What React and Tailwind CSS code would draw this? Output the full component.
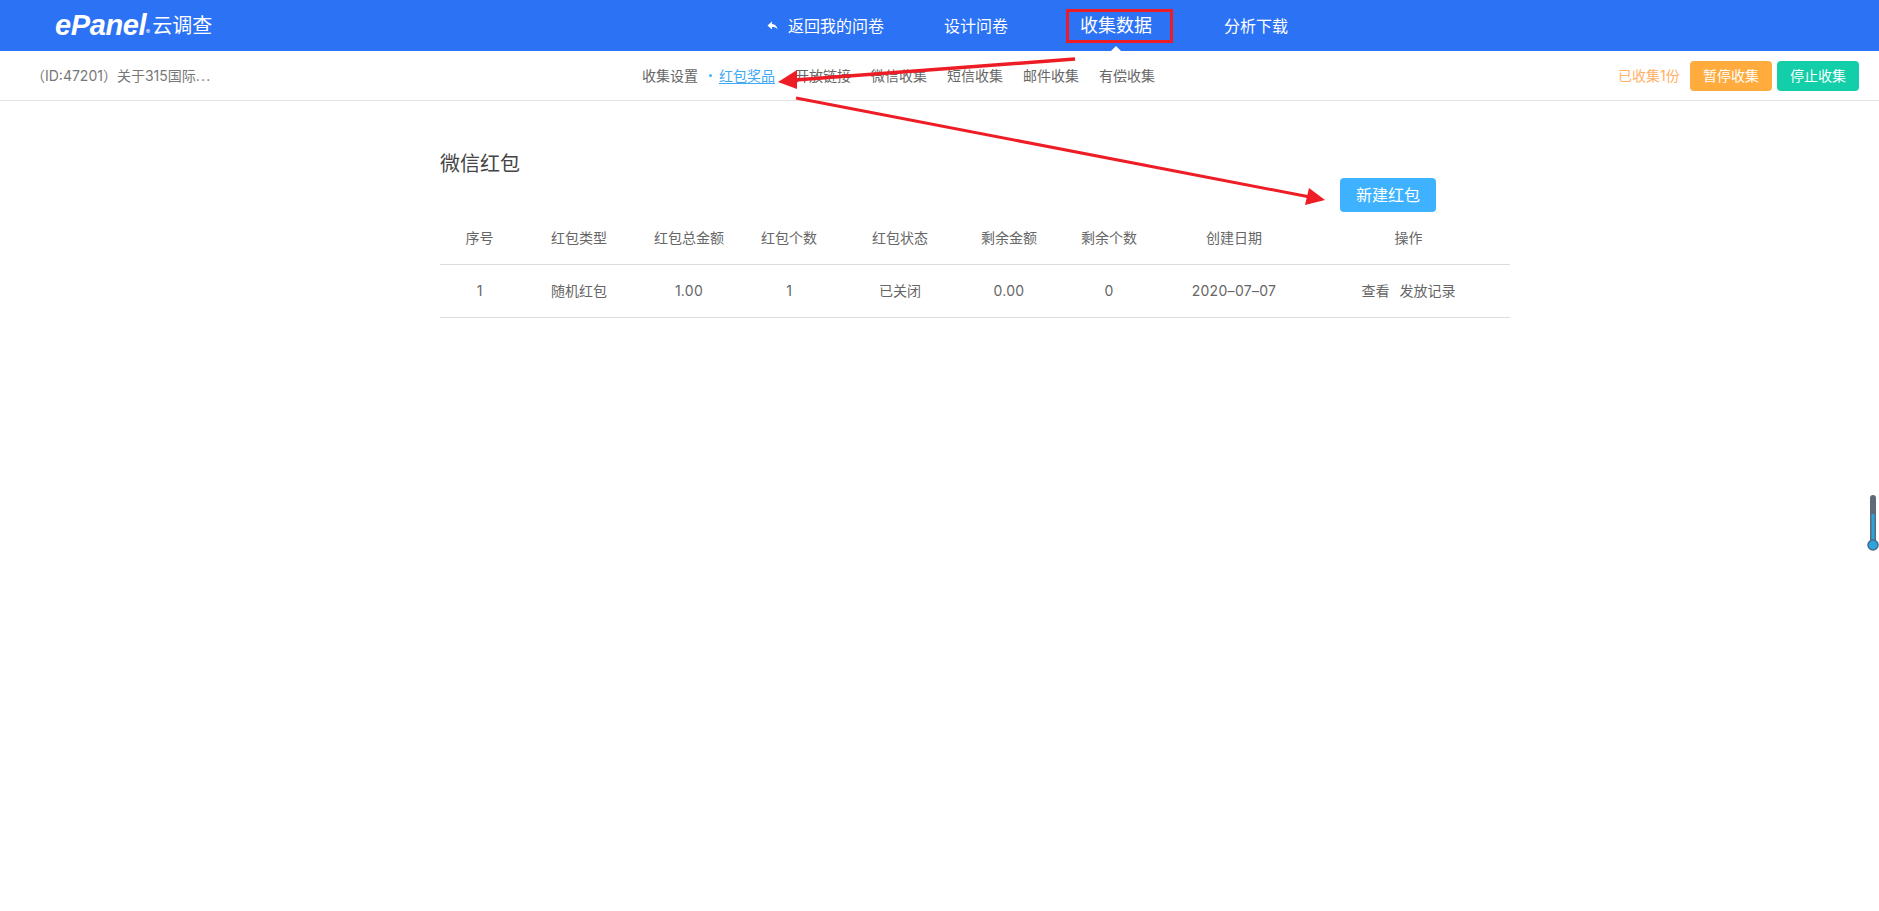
const fontStack = 'font-["Inter","Noto_Sans_CJK_SC",sans-serif]'

const subLinks = ['开放链接', '微信收集', '短信收集', '邮件收集', '有偿收集']

const columns = [
  { title: '序号', value: '1' },
  { title: '红包类型', value: '随机红包' },
  { title: '红包总金额', value: '1.00', numeric: true },
  { title: '红包个数', value: '1' },
  { title: '红包状态', value: '已关闭' },
  { title: '剩余金额', value: '0.00', numeric: true },
  { title: '剩余个数', value: '0' },
  { title: '创建日期', value: '2020–07–07', numeric: true },
]

const gridCols = 'grid grid-cols-[79px_120px_100px_100px_122px_96px_104px_146px_203px]'

const Header = () => (
  <div className="flex h-[51px] items-center bg-[#2c72f5] text-white">
    {/* Logo */}
    <div className="ml-[55px] flex w-[158px] items-center">
      <span className='font-["Liberation_Sans",sans-serif] text-[29px] leading-none font-bold tracking-[-0.4px] italic'>ePanel</span>
      <span className="mt-3 text-[6px] leading-none">®</span>
      <span className="ml-[2px] text-xl leading-none">云调查</span>
    </div>

    {/* Nav */}
    <div className="ml-[554px] flex items-center text-base">
      <svg className="mr-[9px] h-[12px] w-[12px]" viewBox="0 0 12 12" fill="currentColor">
        <path d="M5 1.5 0.5 5.5 5 9.5V7c2.6 0 4.300.6 5.600 2.600C10.200 6.400 8.300 4.300 5 4z" />
      </svg>
      <span>返回我的问卷</span>
      <span className="ml-[60px]">设计问卷</span>
      <span className="relative ml-[72px] text-lg">
        收集数据
        <span className="absolute bottom-[-12px] left-[30px] h-0 w-0 border-x-[6px] border-b-[6px] border-x-transparent border-b-white" />
      </span>
      <span className="ml-[72px]">分析下载</span>
    </div>
  </div>
)

const SubBar = () => (
  <div className="flex h-[50px] items-center border-b border-[#e2e2e2] bg-white text-sm text-[#666]">
    <span className="ml-[31px] w-[611px] text-[#777]">
      （ID:47201）关于315国际<span className="tracking-[1.2px]">...</span>
    </span>
    <span>收集设置</span>
    <span className="mr-[7px] ml-[11px] h-[3px] w-[3px] rounded-full bg-[#3fb2ff]" />
    <span className="text-[#3fa9f5] underline underline-offset-2">红包奖品</span>
    <div className="ml-5 flex gap-5">
      {subLinks.map((link) => (
        <span key={link}>{link}</span>
      ))}
    </div>
    <span className="ml-[463px] w-[72px] text-[#ffb066]">已收集1份</span>
    <button className="h-[30px] w-[82px] rounded bg-[#ffab3d] text-white">暂停收集</button>
    <button className="ml-[5px] h-[30px] w-[82px] rounded bg-[#12cfa9] text-white">停止收集</button>
  </div>
)

const RedPacketTable = () => (
  <div className="ml-[440px] w-[1070px] pt-[50px]">
    <h2 className="text-xl leading-[26px] text-[#444]">微信红包</h2>
    <div className="mt-[1px] flex justify-end pr-[74px]">
      <button className="h-[34px] w-[96px] rounded bg-[#3fb2ff] text-base text-white">新建红包</button>
    </div>

    {/* Table */}
    <div className={`${gridCols} h-[53px] items-center border-b border-[#dcdce0] text-center text-sm text-[#666]`}>
      {columns.map((col) => (
        <span key={col.title}>{col.title}</span>
      ))}
      <span>操作</span>
    </div>
    <div className={`${gridCols} h-[53px] items-center border-b border-[#dedede] text-center text-sm text-[#666]`}>
      {columns.map((col) => (
        <span key={col.title} className={col.numeric ? 'tracking-[0.3px]' : ''}>{col.value}</span>
      ))}
      <span className="flex justify-center gap-[10px]">
        <span>查看</span>
        <span>发放记录</span>
      </span>
    </div>
  </div>
)

// red marks drawn over the screenshot
const Annotations = () => (
  <>
    <div className="absolute top-[9px] left-[1066px] h-[34px] w-[107px] border-[3px] border-[#ee1c25]" />
    <svg className="pointer-events-none absolute top-0 left-0 h-[260px] w-[1400px]" viewBox="0 0 1400 260">
      <path d="M1075 59 795 80" stroke="#ee1c25" strokeWidth="3.500" fill="none" />
      <path d="M778 82 797 70 797 89z" fill="#ee1c25" />
      <path d="M796 98 1310 197" stroke="#ee1c25" strokeWidth="3" fill="none" />
      <path d="M1325 200 1309 188 1305 205z" fill="#ee1c25" />
    </svg>
  </>
)

const Thermometer = () => (
  <svg className="absolute top-[494px] right-[-2px] h-[58px] w-[16px]" viewBox="0 0 16 58">
    <rect x="5" y="1" width="6" height="50" rx="3" fill="#5c6b77" />
    <rect x="6.500" y="20" width="3" height="30" fill="#2aa5e0" />
    <circle cx="8" cy="51" r="5" fill="#2aa5e0" stroke="#4a6a80" strokeWidth="1.500" />
  </svg>
)

const App = () => {
  return (
    <div className={`relative h-[911px] w-full overflow-hidden bg-white ${fontStack}`}>
      <Header />
      <SubBar />
      <RedPacketTable />
      <Annotations />
      <Thermometer />
    </div>
  )
}

export default App
